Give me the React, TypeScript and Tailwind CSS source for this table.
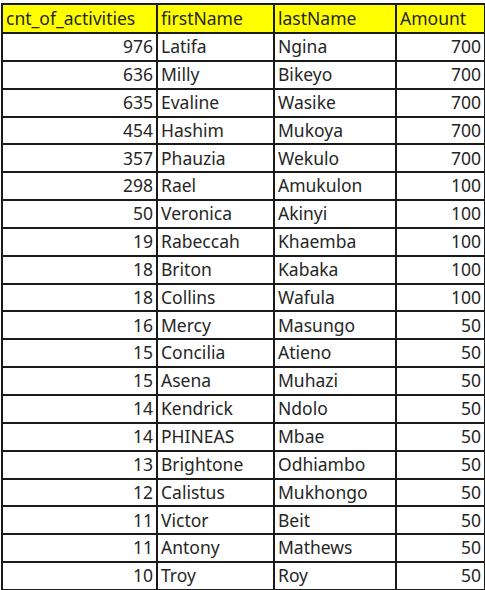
const rows: [number, string, string, number][] = [
  [976, 'Latifa', 'Ngina', 700],
  [636, 'Milly', 'Bikeyo', 700],
  [635, 'Evaline', 'Wasike', 700],
  [454, 'Hashim', 'Mukoya', 700],
  [357, 'Phauzia', 'Wekulo', 700],
  [298, 'Rael', 'Amukulon', 100],
  [50, 'Veronica', 'Akinyi', 100],
  [19, 'Rabeccah', 'Khaemba', 100],
  [18, 'Briton', 'Kabaka', 100],
  [18, 'Collins', 'Wafula', 100],
  [16, 'Mercy', 'Masungo', 50],
  [15, 'Concilia', 'Atieno', 50],
  [15, 'Asena', 'Muhazi', 50],
  [14, 'Kendrick', 'Ndolo', 50],
  [14, 'PHINEAS', 'Mbae', 50],
  [13, 'Brightone', 'Odhiambo', 50],
  [12, 'Calistus', 'Mukhongo', 50],
  [11, 'Victor', 'Beit', 50],
  [11, 'Antony', 'Mathews', 50],
  [10, 'Troy', 'Roy', 50],
]

export default function App() {
  const cell = 'border-2 border-[#1a1a1a] px-[3px] leading-none whitespace-nowrap'
  return (
    <div className="w-[485px] h-[590px] bg-white pt-[3px] pl-[1px] font-['Noto_Sans',sans-serif] text-[17.5px] text-[#262626]">
      <table className="border-collapse table-fixed w-[483px]">
        <colgroup>
          <col className="w-[155px]" />
          <col className="w-[117px]" />
          <col className="w-[122px]" />
          <col className="w-[89px]" />
        </colgroup>
        <thead>
          <tr className="h-[29px] bg-[#ffff00]">
            <th className={`${cell} text-left font-normal`}>cnt_of_activities</th>
            <th className={`${cell} text-left font-normal`}>firstName</th>
            <th className={`${cell} text-left font-normal`}>lastName</th>
            <th className={`${cell} text-left font-normal`}>Amount</th>
          </tr>
        </thead>
        <tbody>
          {rows.map(([cnt, first, last, amount], i) => (
            <tr key={i} className="h-[27.85px]">
              <td className={`${cell} text-right`}>{cnt}</td>
              <td className={cell}>{first}</td>
              <td className={cell}>{last}</td>
              <td className={`${cell} text-right`}>{amount}</td>
            </tr>
          ))}
        </tbody>
      </table>
    </div>
  )
}
